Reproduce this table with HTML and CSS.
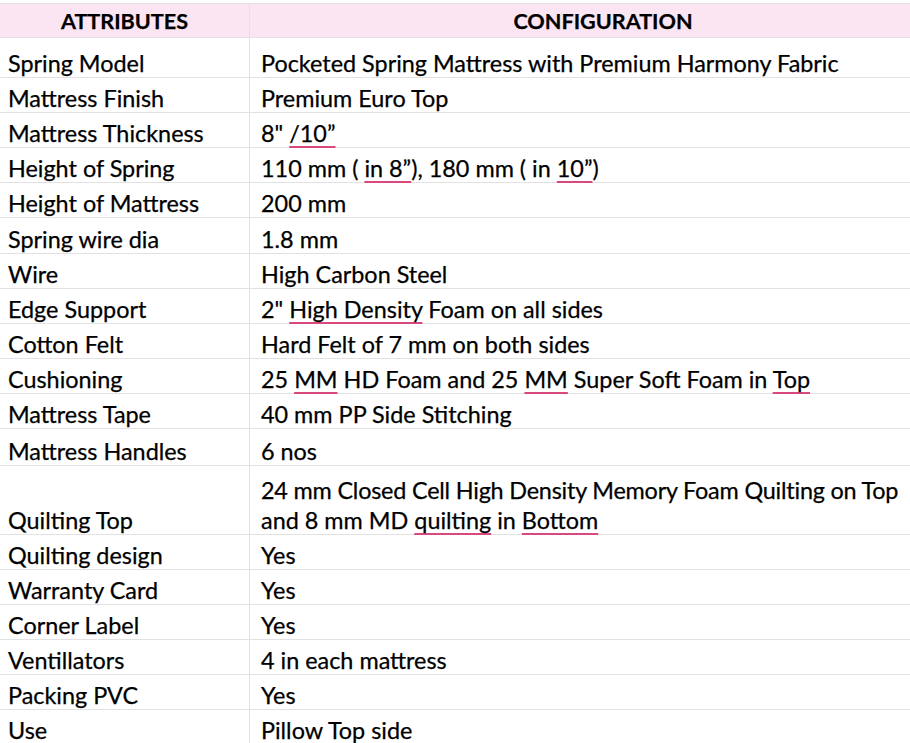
FILE: index.html
```html
<!DOCTYPE html>
<html>
<head>
<meta charset="utf-8">
<link rel="stylesheet" href="styles.css">
</head>
<body>
<div class="sheet">
  <div class="row head">
    <div class="cell c1">ATTRIBUTES</div>
    <div class="cell c2">CONFIGURATION</div>
  </div>
  <div class="row h40"><div class="cell c1">Spring Model</div><div class="cell c2">Pocketed Spring Mattress with Premium Harmony Fabric</div></div>
  <div class="row"><div class="cell c1">Mattress Finish</div><div class="cell c2">Premium Euro Top</div></div>
  <div class="row"><div class="cell c1">Mattress Thickness</div><div class="cell c2">8" <span class="sp">/10”</span></div></div>
  <div class="row"><div class="cell c1">Height of Spring</div><div class="cell c2">110 mm ( <span class="sp">in 8”</span>), 180 mm ( in <span class="sp">10”</span>)</div></div>
  <div class="row"><div class="cell c1">Height of Mattress</div><div class="cell c2">200 mm</div></div>
  <div class="row h36"><div class="cell c1">Spring wire dia</div><div class="cell c2">1.8 mm</div></div>
  <div class="row"><div class="cell c1">Wire</div><div class="cell c2">High Carbon Steel</div></div>
  <div class="row"><div class="cell c1">Edge Support</div><div class="cell c2">2" <span class="sp">High Density</span> Foam on all sides</div></div>
  <div class="row"><div class="cell c1">Cotton Felt</div><div class="cell c2">Hard Felt of 7 mm on both sides</div></div>
  <div class="row"><div class="cell c1">Cushioning</div><div class="cell c2">25 <span class="sp">MM</span> HD Foam and 25 <span class="sp">MM</span> Super Soft Foam in <span class="sp">Top</span></div></div>
  <div class="row"><div class="cell c1">Mattress Tape</div><div class="cell c2">40 mm PP Side Stitching</div></div>
  <div class="row h37"><div class="cell c1">Mattress Handles</div><div class="cell c2">6 nos</div></div>
  <div class="row h69"><div class="cell c1">Quilting Top</div><div class="cell c2 two"><span class="tight">24 mm Closed Cell High Density Memory Foam Quilting on Top</span><br>and 8 mm MD <span class="sp">quilting</span> in <span class="sp">Bottom</span></div></div>
  <div class="row"><div class="cell c1">Quilting design</div><div class="cell c2">Yes</div></div>
  <div class="row"><div class="cell c1">Warranty Card</div><div class="cell c2">Yes</div></div>
  <div class="row"><div class="cell c1">Corner Label</div><div class="cell c2">Yes</div></div>
  <div class="row"><div class="cell c1">Ventillators</div><div class="cell c2">4 in each mattress</div></div>
  <div class="row"><div class="cell c1">Packing PVC</div><div class="cell c2">Yes</div></div>
  <div class="row"><div class="cell c1">Use</div><div class="cell c2">Pillow Top side</div></div>
</div>
</body>
</html>
```
FILE: styles.css
```css
html, body {
  margin: 0;
  padding: 0;
  background: #ffffff;
  overflow: hidden;
}
.sheet {
  padding-top: 3px;
  font-family: "Lato", "Open Sans", sans-serif;
  font-size: 23.4px;
  line-height: 28px;
  color: #000;
  -webkit-text-stroke: 0.25px #000;
}
.row {
  display: grid;
  grid-template-columns: 250px 660px;
  height: 35px;
  box-sizing: border-box;
  border-bottom: 1px solid #e2e2e2;
}
.row.head {
  height: 35px;
  border-top: 1px solid #e2e2e2;
  background: #fbe5f2;
  font-weight: bold;
  font-size: 21.6px;
}
.row.h40 { height: 40px; }
.row.h36 { height: 36px; }
.row.h37 { height: 37px; }
.row.h69 { height: 69px; }
.cell {
  display: flex;
  flex-direction: column;
  justify-content: flex-end;
  white-space: nowrap;
}
.c1 {
  padding-left: 8px;
  border-right: 1px solid #e2e2e2;
}
.c2 {
  padding-left: 11px;
  display: block;
  align-self: end;
}
.c2.two {
  line-height: 30px;
  margin-bottom: -1px;
}
.head .cell {
  justify-content: center;
  align-self: stretch;
  display: flex;
  flex-direction: row;
  align-items: center;
  padding: 0;
  margin: 0;
}
.head .c2 {
  padding-left: 46px;
}
.tight {
  letter-spacing: -0.2px;
}
.sp {
  text-decoration: underline;
  text-decoration-color: #d9497f;
  text-decoration-thickness: 2px;
  text-underline-offset: 4px;
  text-decoration-skip-ink: none;
}
```
